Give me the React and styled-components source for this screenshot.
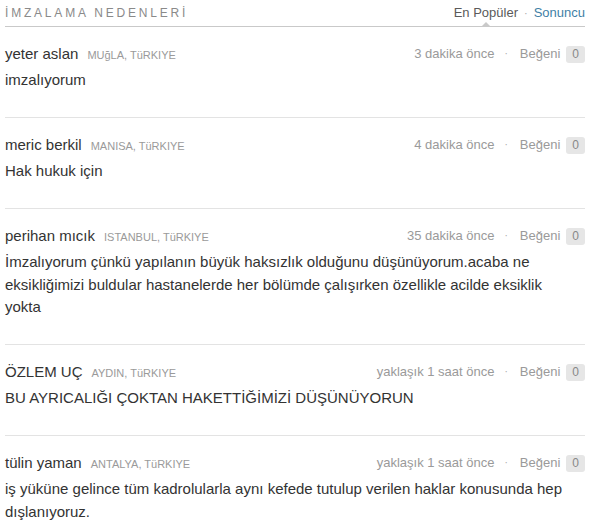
import React from "react";
import styled, { createGlobalStyle } from "styled-components";

const Global = createGlobalStyle`
  html, body { margin: 0; padding: 0; background: #fff; }
  body { font-family: "Liberation Sans", Arial, sans-serif; }
`;

const Wrap = styled.div`
  width: 591px;
  padding: 0 6px 0 5px;
  box-sizing: border-box;
`;

const Header = styled.div`
  display: flex;
  align-items: center;
  justify-content: space-between;
  padding: 5px 0 5px;
  border-bottom: 1px solid #c9c9c9;
  position: relative;
`;

const Title = styled.h3`
  margin: 0;
  font-weight: normal;
  font-size: 12px;
  line-height: 16px;
  letter-spacing: 2.8px;
  color: #8a8a8a;
`;

const Tabs = styled.div`
  display: flex;
  align-items: center;
  font-size: 13px;
  line-height: 16px;
`;

const Tab = styled.span`
  position: relative;
  color: ${(p) => (p.$active ? "#5a5a5a" : "#3f7fa6")};
  &::after {
    content: "";
    display: ${(p) => (p.$active ? "block" : "none")};
    position: absolute;
    left: 50%;
    margin-left: -5px;
    bottom: -6px;
    width: 0;
    height: 0;
    border-left: 5px solid transparent;
    border-right: 5px solid transparent;
    border-bottom: 5px solid #c9c9c9;
  }
`;

const Sep = styled.span`
  color: #aaa;
  margin: 0 6px;
  font-size: 11px;
`;

const Comment = styled.div`
  padding: 17px 0 25.5px;
  border-bottom: 1px solid #e3e3e3;
  &:last-child { border-bottom: none; }
`;

const Meta = styled.div`
  display: flex;
  align-items: center;
  justify-content: space-between;
  height: 20px;
  line-height: 20px;
`;

const Author = styled.div`
  display: flex;
  align-items: baseline;
  line-height: 20px;
`;

const Name = styled.span`
  font-size: 15px;
  color: #333;
`;

const Place = styled.span`
  font-size: 11px;
  line-height: 14px;
  color: #9a9a9a;
  margin-left: 9px;
`;

const Info = styled.div`
  display: flex;
  align-items: center;
  font-size: 13px;
  color: #9a9a9a;
`;

const Dot = styled.span`
  margin: 0 12px 0 10px;
  font-size: 10px;
  color: #aaa;
`;

const Badge = styled.span`
  display: inline-block;
  margin-left: 6px;
  background: #e6e6e6;
  border-radius: 3px;
  font-size: 12px;
  line-height: 17px;
  padding: 0 6px;
  color: #888;
`;

const Body = styled.p`
  margin: 5px 0 0;
  font-size: 15px;
  line-height: 22.5px;
  color: #333;
  max-width: 565px;
`;

const comments = [
  { name: "yeter aslan", place: "MUğLA, TüRKIYE", time: "3 dakika önce", text: "imzalıyorum" },
  { name: "meric berkil", place: "MANISA, TüRKIYE", time: "4 dakika önce", text: "Hak hukuk için" },
  {
    name: "perihan mıcık",
    place: "ISTANBUL, TüRKIYE",
    time: "35 dakika önce",
    text: "İmzalıyorum çünkü yapılanın büyük haksızlık olduğunu düşünüyorum.acaba ne eksikliğimizi buldular hastanelerde her bölümde çalışırken özellikle acilde eksiklik yokta",
  },
  { name: "ÖZLEM UÇ", place: "AYDIN, TüRKIYE", time: "yaklaşık 1 saat önce", text: "BU AYRICALIĞI ÇOKTAN HAKETTİĞİMİZİ DÜŞÜNÜYORUN" },
  {
    name: "tülin yaman",
    place: "ANTALYA, TüRKIYE",
    time: "yaklaşık 1 saat önce",
    text: "iş yüküne gelince tüm kadrolularla aynı kefede tutulup verilen haklar konusunda hep dışlanıyoruz.",
  },
];

export default function App() {
  return (
    <>
      <Global />
      <Wrap>
        <Header>
          <Title>İMZALAMA NEDENLERİ</Title>
          <Tabs>
            <Tab $active>En Popüler</Tab>
            <Sep>·</Sep>
            <Tab>Sonuncu</Tab>
          </Tabs>
        </Header>
        {comments.map((c, i) => (
          <Comment key={i}>
            <Meta>
              <Author>
                <Name>{c.name}</Name>
                <Place>{c.place}</Place>
              </Author>
              <Info>
                <span>{c.time}</span>
                <Dot>·</Dot>
                <span>Beğeni</span>
                <Badge>0</Badge>
              </Info>
            </Meta>
            <Body>{c.text}</Body>
          </Comment>
        ))}
      </Wrap>
    </>
  );
}
